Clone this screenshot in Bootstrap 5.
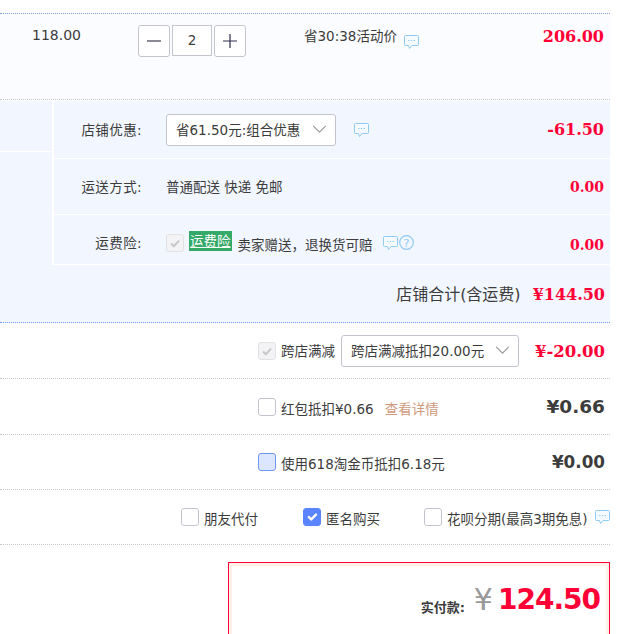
<!DOCTYPE html>
<html lang="zh-CN">

<head>
    <meta charset="UTF-8">
    <meta name="viewport" content="width=device-width, initial-scale=1.0">
    <title>确认订单</title>
    <link href="https://cdn.jsdelivr.net/npm/bootstrap@5.3.3/dist/css/bootstrap.min.css" rel="stylesheet">
    <style>
        body {
            font-family: "DejaVu Sans", "Noto Sans CJK SC", sans-serif;
            font-size: 13.5px;
            line-height: 16px;
            color: #3c3c3c;
            background: #fff;
            overflow: hidden;
        }
        .order-wrap { width: 610px; padding-top: 13px; }
        .item-row {
            height: 87px;
            background: #fbfcff;
            border-top: 1px dotted #80a0d8;
            border-bottom: 1px dotted #c8c8c8;
            padding: 11px 6px 0 32px;
        }
        .item-price { width: 106px; margin-top: 2px; font-size: 14px; color: #3c3c3c; }
        .stepper-btn {
            width: 32px; height: 32px; padding: 0;
            background: #fff; border: 1px solid #c4c4cc; border-radius: 3px;
        }
        .stepper-val {
            width: 40px; height: 31px; margin: 0 2px; text-align: center;
            background: #fff; border: 1px solid #c4c4cc; line-height: 29px; font-size: 13.5px;
        }
        .item-note { margin-left: 58px; margin-top: 3px; }
        .item-note .talk { margin: 7px 0 0 7px; }
        .money-red {
            font-family: "DejaVu Serif", "DejaVu Sans", serif;
            font-weight: 700; color: #ff0036; font-size: 16px; margin-left: auto;
        }
        .money-sm { font-size: 14px; }
        .money-wide { font-size: 16.5px; margin-top: 3px; }
        .shop-block { background: #f1f6ff; margin-top: 1px; }
        .shop-side { width: 54px; border-right: 2px solid #fff; }
        .shop-side > div { height: 51px; border-bottom: 1px solid #fff; }
        .shop-main { flex: 1; }
        .shop-row { padding-right: 6px; border-bottom: 1px solid #fff; }
        .shop-row.r1 { height: 58px; }
        .shop-row.r2 { height: 56px; }
        .shop-row.r3 { height: 50px; padding-top: 6px; }
        .shop-label { width: 88px; text-align: right; margin-right: 24px; letter-spacing: .4px; }
        .pick {
            height: 32px; padding: 0 30px 0 9px; font-size: 13.5px; line-height: 30px; color: #3c3c3c;
            border: 1px solid #c4c4d0; border-radius: 3px;
            background-color: #fff;
            background-image: url("data:image/svg+xml,%3csvg xmlns='http://www.w3.org/2000/svg' viewBox='0 0 16 10'%3e%3cpath fill='none' stroke='%23999' stroke-width='1.2' d='M1 1l7 7 7-7'/%3e%3c/svg%3e");
            background-position: right 8px center; background-size: 15px 9px; background-repeat: no-repeat;
        }
        .pick-a { width: 170px; }
        .pick-a + .talk { margin-left: 18px; }
        .pick-b { width: 178px; margin-left: 6px; }
        .talk { width: 15px; height: 14px; flex: none; }
        .r3-talk { margin-left: 10px; margin-right: 1px; }
        .tick.form-check-input {
            width: 18px; height: 18px; margin: 0; flex: none; border: 1px solid #c4c4d0; border-radius: 3px;
            opacity: 1;
        }
        .tick.form-check-input:disabled {
            background-color: #f3f3f5; border-color: #e2e2e6; opacity: 1;
            background-image: url("data:image/svg+xml,%3csvg xmlns='http://www.w3.org/2000/svg' viewBox='0 0 20 20'%3e%3cpath fill='none' stroke='%23c8c8c8' stroke-width='2.6' d='M5 10.5l3.5 3.5 6.5-7'/%3e%3c/svg%3e");
        }
        .tick.form-check-input:checked:not(:disabled) { background-color: #5b85ff; border-color: #5b85ff; }
        .tick.tick-pale { background-color: #dce6ff; border-color: #6f97f5; }
        .ins-tag { background: #35a968; color: #fff; padding: 0 1px; line-height: 20px; height: 20px; margin: 0 6px 4px 5px; text-decoration: underline; }
        .total-row {
            height: 58px; padding: 3px 5px 0 0; border-bottom: 1px dotted #6d9bf5; font-size: 16px; background: #f1f6ff;
        }
        .extra-row { height: 56px; border-bottom: 1px dotted #c8c8c8; padding-right: 5px; padding-left: 258px; }
        .extra-row.last-one { height: 55px; }
        .extra-row .tick { margin-right: 5px; }
        .detail-link { color: #cf9a7c; margin-left: 11px; text-decoration: none; }
        .money-dark { font-weight: 700; font-size: 18.5px; color: #3c3c3c; margin-left: auto; }
        .money-dark.sm { font-size: 16.8px; }
        .opts-row { height: 55px; border-bottom: 1px dotted #c8c8c8; padding-left: 181px; white-space: nowrap; }
        .opt-item { width: 122px; flex: none; }
        .opt-item + .opt-item { width: 121px; }
        .opts-row .tick { margin-right: 5px; }
        .opts-row .talk { margin-left: 7px; }
        .opts-row span { margin-top: 3px; }
        .pay-box {
            margin: 17px 0 0 228px; height: 90px; padding: 19px 9px 0 0;
            border: 1px solid #ff0036; outline: 3px solid #fdf1e9; outline-offset: -4px;
        }
        .pay-label { font-weight: 700; font-size: 13px; color: #3c3c3c; }
        .pay-yen { font-size: 30px; line-height: 36px; color: #999; margin: 0 5px 0 9px; }
        .pay-sum { font-size: 28px; line-height: 36px; font-weight: 700; color: #ff0036; letter-spacing: -1px; }
    </style>
</head>

<body>
    <svg width="0" height="0" class="position-absolute">
        <symbol id="talk" viewBox="0 0 15 14">
            <path d="M1.5.5h12a1 1 0 0 1 1 1v8a1 1 0 0 1-1 1H8l-2.5 3-1-3H1.5a1 1 0 0 1-1-1v-8a1 1 0 0 1 1-1z" fill="#f4faff" stroke="#8fcaf2"/>
            <path d="M4 5.5h1.4M6.8 5.5h1.4M9.6 5.5h1.4" stroke="#8fcaf2"/>
        </symbol>
    </svg>

    <div class="order-wrap">
        <div class="item-row d-flex align-items-start">
            <div class="item-price">118.00</div>
            <div class="d-flex align-items-start">
                <button class="stepper-btn d-flex align-items-center justify-content-center">
                    <svg width="16" height="16"><path d="M1 8h14" stroke="#3c3c50" stroke-width="1.2"/></svg>
                </button>
                <div class="stepper-val">2</div>
                <button class="stepper-btn d-flex align-items-center justify-content-center">
                    <svg width="16" height="16"><path d="M1 8h14M8 1v14" stroke="#2c2c50" stroke-width="1.2"/></svg>
                </button>
            </div>
            <div class="item-note d-flex">省30:38活动价<svg class="talk"><use href="#talk"/></svg></div>
            <div class="money-red mt-1">206.00</div>
        </div>

        <div class="shop-block d-flex">
            <div class="shop-side"><div></div></div>
            <div class="shop-main">
                <div class="shop-row r1 d-flex align-items-center">
                    <div class="shop-label">店铺优惠:</div>
                    <select class="form-select pick pick-a"><option>省61.50元:组合优惠</option></select>
                    <svg class="talk"><use href="#talk"/></svg>
                    <div class="money-red">-61.50</div>
                </div>
                <div class="shop-row r2 d-flex align-items-center">
                    <div class="shop-label">运送方式:</div>
                    <div>普通配送 快递 免邮</div>
                    <div class="money-red money-sm">0.00</div>
                </div>
                <div class="shop-row r3 d-flex align-items-center">
                    <div class="shop-label">运费险:</div>
                    <input class="form-check-input tick" type="checkbox" checked disabled>
                    <span class="ins-tag">运费险</span>
                    <span class="mt-1">卖家赠送，退换货可赔</span>
                    <svg class="talk r3-talk"><use href="#talk"/></svg>
                    <svg width="15" height="15"><circle cx="7.5" cy="7.5" r="6.8" fill="none" stroke="#8fcaf2" stroke-width="1.2"/><text x="7.5" y="11.5" font-size="11" text-anchor="middle" fill="#8fcaf2">?</text></svg>
                    <div class="money-red money-sm mt-1">0.00</div>
                </div>
            </div>
        </div>

        <div class="total-row d-flex align-items-center justify-content-end">
            <span>店铺合计(含运费)</span>
            <span class="money-red ms-2 ps-1">¥144.50</span>
        </div>

        <div class="extra-row d-flex align-items-center">
            <input class="form-check-input tick" type="checkbox" checked disabled>
            <span>跨店满减</span>
            <select class="form-select pick pick-b"><option>跨店满减抵扣20.00元</option></select>
            <div class="money-red money-wide">¥-20.00</div>
        </div>
        <div class="extra-row d-flex align-items-center">
            <input class="form-check-input tick" type="checkbox">
            <span class="mt-1">红包抵扣¥0.66</span>
            <a class="detail-link mt-1" href="#">查看详情</a>
            <div class="money-dark">¥0.66</div>
        </div>
        <div class="extra-row last-one d-flex align-items-center">
            <input class="form-check-input tick tick-pale" type="checkbox">
            <span class="mt-1">使用618淘金币抵扣6.18元</span>
            <div class="money-dark sm">¥0.00</div>
        </div>

        <div class="opts-row d-flex align-items-center">
            <div class="opt-item d-flex align-items-center">
                <input class="form-check-input tick" type="checkbox">
                <span>朋友代付</span>
            </div>
            <div class="opt-item d-flex align-items-center">
                <input class="form-check-input tick" type="checkbox" checked>
                <span>匿名购买</span>
            </div>
            <input class="form-check-input tick" type="checkbox">
            <span>花呗分期(最高3期免息)</span>
            <svg class="talk"><use href="#talk"/></svg>
        </div>

        <div class="pay-box d-flex align-items-start justify-content-end">
            <div class="d-flex align-items-center">
                <span class="pay-label mt-3">实付款:</span>
                <span class="pay-yen">¥</span>
                <span class="pay-sum">124.50</span>
            </div>
        </div>
    </div>

    <script src="https://cdn.jsdelivr.net/npm/bootstrap@5.3.3/dist/js/bootstrap.bundle.min.js"></script>
</body>

</html>
